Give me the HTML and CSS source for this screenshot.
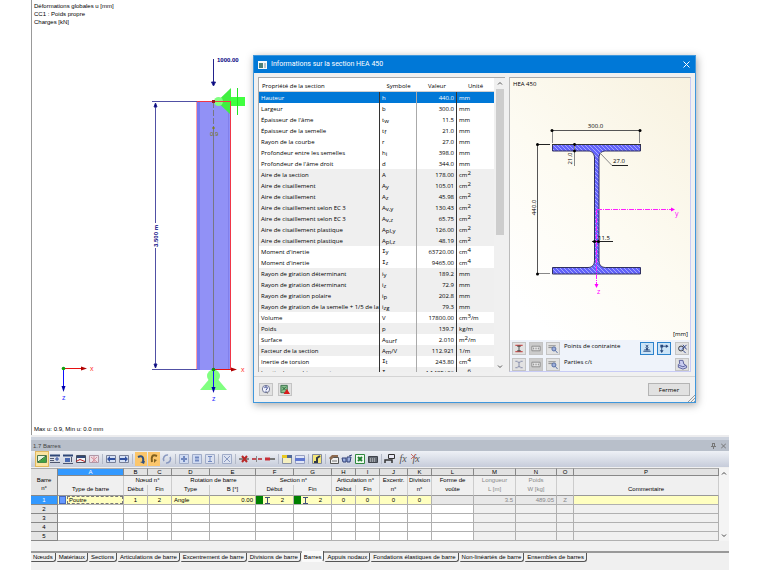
FILE: index.html
```html
<!DOCTYPE html>
<html lang="fr">
<head>
<meta charset="utf-8">
<title>Informations sur la section HEA 450</title>
<link rel="stylesheet" href="styles.css">
</head>
<body>
<main class="app">
  <section class="view">
    <svg class="model" viewBox="32 0 697 435" preserveAspectRatio="xMinYMin meet" role="img" aria-label="Modèle de la barre">
      <rect x="197" y="101" width="34" height="269" fill="#9191f6"/>
      <rect x="197" y="101" width="3" height="269" fill="#7777ee"/>
      <rect x="228" y="101" width="1" height="269" fill="#8080ec"/>
      <path d="M196.5 101v269" stroke="#ffa0a8"/>
      <path d="M217 101.500L231 88v27z" fill="#40f040"/>
      <path d="M231 97h14v9h-14z" fill="#40ff40"/>
      <path d="M237.500 88v27" stroke="#22e622"/>
      <circle cx="218.500" cy="101.500" r="4.500" fill="#80ff80"/>
      <path d="M197 101.500h34M230.500 101v269" stroke="#f03648" fill="none"/>
      <path d="M213.500 102v27" stroke="#777780" stroke-dasharray="6 2"/>
      <path d="M213.500 129v241" stroke="#777784"/>
      <circle cx="213.500" cy="128" r="1.200" fill="#80801a"/>
      <rect x="212" y="100" width="3" height="3" fill="#9c1c20"/>
      <text x="210" y="136" class="olive">0.9</text>
      <g stroke="#22228c" fill="#000080">
        <path d="M152 101.500h45M152 369.500h45" stroke="#5050a4"/>
        <path d="M155.500 103v265" stroke="#5050a4"/>
        <path d="M155.500 103l1.500 4h-3zM155.500 368l1.500-4h-3z"/>
        <path d="M213.500 59v24"/>
        <path d="M213.500 86l2-4h-4z"/>
      </g>
      <rect x="151" y="223" width="9" height="25" fill="#fff"/>
      <text transform="translate(158 247) rotate(-90)" class="navy">3.500 m</text>
      <text x="217" y="62" class="navy load">1000.00</text>
      <path d="M213.500 374L227 390h-27z" fill="#80ff80"/>
      <circle cx="213.500" cy="376" r="6.500" fill="#80ff80"/>
      <path d="M214 369.500h18" stroke="#e61010"/>
      <path d="M231 367.500l6 2-6 2z" fill="#b00000"/>
      <path d="M213.500 370v19" stroke="#1010ff"/>
      <path d="M211.500 387h4l-2 6z" fill="#0000a8"/>
      <circle cx="213.500" cy="369.500" r="1.800" fill="#109010"/>
      <text x="241" y="372" class="red">x</text>
      <text x="212" y="401" class="blue">z</text>
      <path d="M63 368.500h20" stroke="#e61010"/>
      <path d="M81 366.500l6 2-6 2z" fill="#b00000"/>
      <path d="M63.500 369v18" stroke="#1010ff"/>
      <path d="M61.500 386h4l-2 6z" fill="#0000a8"/>
      <circle cx="63.500" cy="368.500" r="1.800" fill="#10a010"/>
      <text x="90" y="371" class="red">x</text>
      <text x="62" y="400" class="blue">z</text>
    </svg>
    <div class="caption">
      <p>Déformations globales u [mm]</p>
      <p>CC1 : Poids propre</p>
      <p>Charges [kN]</p>
    </div>
    <p class="range">Max u: 0.9, Min u: 0.0 mm</p>

    <div class="dialog" role="dialog" aria-labelledby="dlg-title">
      <header class="dialog-bar">
        <svg width="9" height="8" viewBox="0 0 9 8"><path d="M0 0h9v8H0z" fill="#f4f8fa"/><path d="M1 2h4v5H1z" fill="#4c8078"/><path d="M6 2h2v5H6z" fill="#b8c4c8"/></svg>
        <h1 id="dlg-title">Informations sur la section HEA 450</h1>
        <button class="close" aria-label="Fermer la fenêtre"><svg width="7" height="7" viewBox="0 0 7 7"><path d="M.5.5l6 6M6.500.5l-6 6" stroke="#fff"/></svg></button>
      </header>
      <div class="dialog-body">
        <div class="props-box">
          <div class="props-clip">
          <table class="props">
            <colgroup><col><col class="c-sym"><col class="c-val"><col class="c-unit"></colgroup>
            <thead><tr><th class="first">Propriété de la section</th><th>Symbole</th><th>Valeur</th><th>Unité</th></tr></thead>
            <tbody>
              <tr class="sel"><td>Hauteur</td><td>h</td><td>440.0</td><td>mm</td></tr>
              <tr><td>Largeur</td><td>b</td><td>300.0</td><td>mm</td></tr>
              <tr><td>Épaisseur de l'âme</td><td>t<sub>w</sub></td><td>11.5</td><td>mm</td></tr>
              <tr><td>Épaisseur de la semelle</td><td>t<sub>f</sub></td><td>21.0</td><td>mm</td></tr>
              <tr><td>Rayon de la courbe</td><td>r</td><td>27.0</td><td>mm</td></tr>
              <tr><td>Profondeur entre les semelles</td><td>h<sub>i</sub></td><td>398.0</td><td>mm</td></tr>
              <tr><td>Profondeur de l'âme droit</td><td>d</td><td>344.0</td><td>mm</td></tr>
              <tr class="alt"><td>Aire de la section</td><td>A</td><td>178.00</td><td>cm<sup>2</sup></td></tr>
              <tr class="alt"><td>Aire de cisaillement</td><td>A<sub>y</sub></td><td>105.01</td><td>cm<sup>2</sup></td></tr>
              <tr class="alt"><td>Aire de cisaillement</td><td>A<sub>z</sub></td><td>45.98</td><td>cm<sup>2</sup></td></tr>
              <tr class="alt"><td>Aire de cisaillement selon EC 3</td><td>A<sub>v,y</sub></td><td>130.43</td><td>cm<sup>2</sup></td></tr>
              <tr class="alt"><td>Aire de cisaillement selon EC 3</td><td>A<sub>v,z</sub></td><td>65.75</td><td>cm<sup>2</sup></td></tr>
              <tr class="alt"><td>Aire de cisaillement plastique</td><td>A<sub>pl,y</sub></td><td>126.00</td><td>cm<sup>2</sup></td></tr>
              <tr class="alt"><td>Aire de cisaillement plastique</td><td>A<sub>pl,z</sub></td><td>48.19</td><td>cm<sup>2</sup></td></tr>
              <tr><td>Moment d'inertie</td><td class="serif">I<sub>y</sub></td><td>63720.00</td><td>cm<sup>4</sup></td></tr>
              <tr><td>Moment d'inertie</td><td class="serif">I<sub>z</sub></td><td>9465.00</td><td>cm<sup>4</sup></td></tr>
              <tr class="alt"><td>Rayon de giration déterminant</td><td>i<sub>y</sub></td><td>189.2</td><td>mm</td></tr>
              <tr class="alt"><td>Rayon de giration déterminant</td><td>i<sub>z</sub></td><td>72.9</td><td>mm</td></tr>
              <tr class="alt"><td>Rayon de giration polaire</td><td>i<sub>p</sub></td><td>202.8</td><td>mm</td></tr>
              <tr class="alt"><td>Rayon de giration de la semelle + 1/5 de la</td><td>i<sub>zg</sub></td><td>79.3</td><td>mm</td></tr>
              <tr><td>Volume</td><td>V</td><td>17800.00</td><td>cm<sup>3</sup>/m</td></tr>
              <tr class="alt"><td>Poids</td><td>p</td><td>139.7</td><td>kg/m</td></tr>
              <tr><td>Surface</td><td>A<sub>surf</sub></td><td>2.010</td><td>m<sup>2</sup>/m</td></tr>
              <tr class="alt"><td>Facteur de la section</td><td>A<sub>m</sub>/V</td><td>112.921</td><td>1/m</td></tr>
              <tr><td>Inertie de torsion</td><td class="serif">I<sub>t</sub></td><td>243.80</td><td>cm<sup>4</sup></td></tr>
              <tr class="alt"><td>Inertie de gauchissement</td><td class="serif">I<sub>ω</sub></td><td>4.148E+06</td><td>cm<sup>6</sup></td></tr>
            </tbody>
          </table>
          </div>
          <div class="scroll">
            <svg width="6" height="4" viewBox="0 0 6 4"><path d="M1 3.500l2-2 2 2" fill="none" stroke="#555"/></svg>
            <div class="thumb"></div>
            <svg width="6" height="4" viewBox="0 0 6 4"><path d="M1 .5l2 2 2-2" fill="none" stroke="#555"/></svg>
          </div>
        </div>

        <div class="figure">
          <svg class="profile" viewBox="510 78 180 262" role="img" aria-label="Section HEA 450">
            <defs>
              <pattern id="hatch" width="4" height="4" patternUnits="userSpaceOnUse"><path d="M0 0h4v4H0z" fill="#6262fa"/><path d="M-1-1l6 6M-1 3l2 2M3-1l2 2" stroke="#aeb2ff" stroke-width=".9"/></pattern>
            </defs>
            <text x="513" y="86" class="dim">HEA 450</text>
            <path d="M552.500 144.500h88v6.500h-35c-4 0-6.500 2.500-6.500 7v102.500c0 4.500 2.500 7 6.500 7h35v6.500h-88v-6.500h35.500c4 0 6.500-2.500 6.500-7V158c0-4.500-2.500-7-6.500-7h-35.500z" fill="url(#hatch)" stroke="#303060"/>
            <path d="M552 144.500h89" stroke="#333"/>
            <g stroke="#555" fill="none">
              <path d="M552 130.500h88M537.500 145v129"/>
              <path d="M552.500 131v12M639.500 131v12M538 273.500h12M574.500 145v21M600 153l12 12.500" stroke="#888"/>
              <path d="M538 144.500h12M612 165.500h16M592 241.500h21" stroke="#222"/>
            </g>
            <g fill="#000">
              <circle cx="552" cy="130.500" r="1.500"/><circle cx="640" cy="130.500" r="1.500"/>
              <circle cx="537.500" cy="144.500" r="1.500"/><circle cx="537.500" cy="274" r="1.500"/>
              <circle cx="574.500" cy="144.500" r="1.400"/><circle cx="574.500" cy="151" r="1.400"/>
              <circle cx="594.500" cy="241.500" r="1.500"/><circle cx="598.500" cy="241.500" r="1.500"/>
            </g>
            <text x="595.500" y="128" class="dim mid">300.0</text>
            <text transform="translate(535.500 207.500) rotate(-90)" class="dim mid">440.0</text>
            <text transform="translate(572 158.500) rotate(-90)" class="dim mid">21.0</text>
            <text x="619" y="163" class="dim mid">27.0</text>
            <text x="598" y="240" class="dim">11.5</text>
            <g stroke="#ff20ff" fill="none" stroke-dasharray="5 1 1 1"><path d="M597 209.500h75M596.500 210v76"/></g>
            <path d="M671 207.500l4 2-4 2zM594.500 284h4l-2 4z" fill="#ff00ff"/>
            <text x="675" y="216" class="axis">y</text>
            <text x="597" y="294" class="axis">z</text>
            <text x="688" y="336" class="dim end">[mm]</text>
          </svg>
          <div class="options">
            <button class="ib" aria-label="Contour"><svg viewBox="0 0 12 12"><path d="M2 2.500h8M2 9.500h8" stroke="#c02020"/><path d="M4 3.500h4M4 8.500h4M6 3v6" stroke="#444"/></svg></button>
            <button class="ib dark" aria-label="Numéros des points"><svg viewBox="0 0 12 12"><path d="M1.500 3.500h9v5h-9z" fill="#eee" stroke="#888"/><path d="M3.500 5v2M6 5v2M8.500 5v2" stroke="#777"/></svg></button>
            <button class="ib" aria-label="Détails des points"><svg viewBox="0 0 12 12"><path d="M1 3h8M1 5h5" stroke="#888"/><circle cx="7" cy="6.500" r="2.200" fill="#9fb0dc" stroke="#5068a0"/><path d="M8.500 8l2.500 3" stroke="#5068a0"/></svg></button>
            <span class="lbl">Points de contrainte</span>
            <button class="ib on" aria-label="Cotes"><svg viewBox="0 0 12 12"><path d="M2 9h8M3 7.500h6" stroke="#28487c"/><path d="M6 5v3" stroke="#28487c" stroke-width="2"/><path d="M4.500 2l3 3M7.500 2l-3 3" stroke="#28487c"/></svg></button>
            <button class="ib on" aria-label="Axes"><svg viewBox="0 0 12 12"><path d="M3.500 10V3.500H10" fill="none" stroke="#28487c"/><path d="M8 1.500l3 2-3 2zM1.500 8h4l-2 3zM2 2h3v3H2z" fill="#28487c"/></svg></button>
            <button class="ib" aria-label="Zoom"><svg viewBox="0 0 12 12"><circle cx="5" cy="6" r="2.700" fill="#c8d6f4" stroke="#333"/><path d="M7 8l3 3M7 2l4 5M11 2L6 7" stroke="#263c88"/></svg></button>
            <button class="ib" aria-label="Contour c/t"><svg viewBox="0 0 12 12"><path d="M2 2.500h2.500M7.500 2.500H10M2 9.500h2.500M7.500 9.500H10M4.500 3.500h3M4.500 8.500h3M6 3.500v5" stroke="#8088a8"/></svg></button>
            <button class="ib dark" aria-label="Numéros c/t"><svg viewBox="0 0 12 12"><path d="M1.500 3.500h9v5h-9z" fill="#eee" stroke="#888"/><path d="M3.500 5v2M6 5v2M8.500 5v2" stroke="#777"/></svg></button>
            <button class="ib" aria-label="Détails c/t"><svg viewBox="0 0 12 12"><path d="M1 3h8M1 5h5" stroke="#888"/><circle cx="7" cy="6.500" r="2.200" fill="#9fb0dc" stroke="#5068a0"/><path d="M8.500 8l2.500 3" stroke="#5068a0"/></svg></button>
            <span class="lbl">Parties c/t</span>
            <span></span><span></span>
            <button class="ib" aria-label="Imprimer"><svg viewBox="0 0 12 12"><path d="M3 1.500h4l1 4 3 2v2L7 11 2 9V6l1.500-1z" fill="#c8ccf0" stroke="#555c98"/><path d="M3 7l4 1.500L10.500 7" stroke="#555c98" fill="none"/></svg></button>
          </div>
        </div>
      </div>
      <footer class="dialog-foot">
        <button class="ib" aria-label="Aide"><svg viewBox="0 0 12 12"><circle cx="6" cy="5.500" r="4" fill="#f4f6ff" stroke="#666c90"/><path d="M4.500 4.500c0-2 3-2 3 0 0 1-1.500 1-1.500 2.200M6 7.500v1" stroke="#203080" fill="none"/><path d="M6 9l2 2 0-2z" fill="#777"/></svg></button>
        <button class="ib" aria-label="Exporter"><svg viewBox="0 0 12 12"><path d="M1.500 1.500h7v8h-7z" fill="#8cc090" stroke="#38704a"/><path d="M3 3l4 4M7 3L3 7" stroke="#1c6030"/><path d="M8 5.500l3.500 5.500h-7z" fill="#d81c1c"/></svg></button>
        <button class="push">Fermer</button>
      </footer>
      <svg class="grip" width="7" height="7" viewBox="0 0 7 7"><path d="M0 7l7-7M3 7l4-4M6 7l1-1" stroke="#999"/></svg>
    </div>
  </section>

  <section class="panel">
    <header class="panel-title">
      <h2>1.7 Barres</h2>
      <button aria-label="Épingler"><svg width="5" height="6" viewBox="0 0 5 6"><path d="M1.500 0v3M3.500 0v3M0 3.500h5M2.500 4v2M1 .5h3" stroke="#777" fill="none"/></svg></button>
      <button aria-label="Fermer le panneau"><svg width="5" height="6" viewBox="0 0 5 6"><path d="M0 .5l5 5M5 .5l-5 5" stroke="#777"/></svg></button>
    </header>
    <div class="toolbar" role="toolbar" aria-label="Outils de tableau">
      <button class="tb hot" aria-label="Modifier"><svg viewBox="0 0 12 12"><path d="M1.500 2.500h9v7h-9z" fill="#e8f4e0" stroke="#507850"/><path d="M2 9.500l8-6v6z" fill="#40a040"/><path d="M2 9l8-6" stroke="#206020"/></svg></button>
      <button class="tb" aria-label="Insérer une ligne"><svg viewBox="0 0 12 12"><path d="M1 2.500h10" stroke="#304878" stroke-width="2"/><path d="M1 5h4v1H1zM1 7h4v1H1zM1 9h10v1H1z" fill="#505870"/><path d="M8 4v4M6 6h4" stroke="#3050a0"/></svg></button>
      <button class="tb" aria-label="Copier une ligne"><svg viewBox="0 0 12 12"><path d="M1 2.500h10" stroke="#304878" stroke-width="2"/><path d="M3 5h5v4H3z" fill="#4868b0"/><path d="M1 10.500h10M9.500 4v5" stroke="#505870"/></svg></button>
      <button class="tb" aria-label="Filtrer"><svg viewBox="0 0 12 12"><path d="M1.500 2.500h9v7h-9z" fill="#f2f4f8" stroke="#485060"/><path d="M2 3h8v2H2z" fill="#304878"/><path d="M1 8.500l4-2 5 2" stroke="#c02020" fill="none"/></svg></button>
      <button class="tb" aria-label="Effacer"><svg viewBox="0 0 12 12"><path d="M1.500 2.500h9v7h-9z" fill="#ecdfe6" stroke="#b098a8"/><path d="M3 4l6 5M9 4L4 9M6 3v6" stroke="#d8909c"/></svg></button>
      <i class="sep"></i>
      <button class="tb" aria-label="Tableau précédent"><svg viewBox="0 0 12 12"><path d="M1.500 2.500h9v7h-9z" fill="#d5e0f5" stroke="#788098"/><path d="M2 6l3-3v2h5v2H5v2z" fill="#3050a0"/></svg></button>
      <button class="tb" aria-label="Tableau suivant"><svg viewBox="0 0 12 12"><path d="M1.500 2.500h9v7h-9z" fill="#d5e0f5" stroke="#788098"/><path d="M10 6L7 3v2H2v2h5v2z" fill="#3050a0"/></svg></button>
      <i class="sep"></i>
      <button class="tb hot2" aria-label="Synchroniser la sélection"><svg viewBox="0 0 12 12"><path d="M3 4c4-2 6 0 5 5" fill="none" stroke="#305080" stroke-width="2"/><path d="M5 9l5-1-1 3z" fill="#305080"/></svg></button>
      <button class="tb hot2" aria-label="Afficher la sélection"><svg viewBox="0 0 12 12"><path d="M9 3C4 1 3 4 4 9" fill="none" stroke="#806020" stroke-width="2"/><path d="M6 6l3 1-3 3z" fill="#806020"/></svg></button>
      <button class="tb" aria-label="Actualiser"><svg viewBox="0 0 12 12"><path d="M3 8a4 4 0 0 1 4-6M9 4a4 4 0 0 1-4 6" fill="none" stroke="#8898c0" stroke-width="1.500"/></svg></button>
      <i class="sep"></i>
      <button class="tb" aria-label="Ajouter"><svg viewBox="0 0 12 12"><path d="M1.500 1.500h9v9h-9z" fill="#d0dbf2" stroke="#a0acc8"/><path d="M6 3v6M3 6h6" stroke="#7088c0" stroke-width="2"/></svg></button>
      <button class="tb" aria-label="Liste"><svg viewBox="0 0 12 12"><path d="M1.500 1.500h9v9h-9z" fill="#d0dbf2" stroke="#a0acc8"/><path d="M4 4.500h4M4 7.500h4" stroke="#7088c0" stroke-width="2"/></svg></button>
      <button class="tb" aria-label="Détail"><svg viewBox="0 0 12 12"><path d="M1.500 1.500h9v9h-9z" fill="#dbe1f0" stroke="#a0acc8"/><path d="M4 3.500h4M6 3v6M4 8.500h4" stroke="#7088c0"/></svg></button>
      <i class="sep"></i>
      <button class="tb" aria-label="Tout supprimer"><svg viewBox="0 0 12 12"><path d="M1.500 1.500h9v9h-9z" fill="#dce2f0" stroke="#a0acc8"/><path d="M3 3l6 6M9 3L3 9" stroke="#8898c0"/></svg></button>
      <i class="sep"></i>
      <button class="tb" aria-label="Supprimer la barre"><svg viewBox="0 0 12 12"><path d="M1 6h10" stroke="#888" stroke-width="2"/><path d="M4 3l5 6M9 3L4 9" stroke="#b82828" stroke-width="2"/></svg></button>
      <button class="tb" aria-label="Diviser la barre"><svg viewBox="0 0 12 12"><path d="M1 6h4M7 6h4" stroke="#c05058" stroke-width="2"/><path d="M5.500 3v6" stroke="#888"/></svg></button>
      <button class="tb" aria-label="Joindre les barres"><svg viewBox="0 0 12 12"><path d="M1 4.500h5v3H1z" fill="#c83038"/><path d="M6 6h5" stroke="#777" stroke-width="2"/></svg></button>
      <i class="sep"></i>
      <button class="tb" aria-label="Couleurs"><svg viewBox="0 0 12 12"><path d="M1.500 2.500h9v8h-9z" fill="#f5f0c0" stroke="#8890a0"/><path d="M1 2h5v3H1z" fill="#e8c820"/><path d="M6 2h5v3H6z" fill="#506898"/></svg></button>
      <button class="tb" aria-label="Colonnes"><svg viewBox="0 0 12 12"><path d="M1.500 2.500h9v8h-9z" fill="#e0e6f8" stroke="#98a0c0"/><path d="M1 5h10v3H1z" fill="#6078d0"/></svg></button>
      <i class="sep"></i>
      <button class="tb" aria-label="Affichage"><svg viewBox="0 0 12 12"><path d="M1.500 1.500h9v9h-9z" fill="#f4e678" stroke="#8088a0"/><path d="M3 9h3V5l3-2" stroke="#303848" stroke-width="2" fill="none"/></svg></button>
      <i class="sep"></i>
      <button class="tb" aria-label="Propriétés"><svg viewBox="0 0 12 12"><path d="M2.500 4.500h8v6h-8z" fill="#f0f0f0" stroke="#555"/><path d="M1 5l3-3h6v2H6L3 7z" fill="#8c6a50"/><path d="M4 8h5" stroke="#777"/></svg></button>
      <button class="tb" aria-label="Lunettes"><svg viewBox="0 0 12 12"><path d="M1 5h4v4H2zM6 4h4l-1 5H6z" fill="#9cb0e0" stroke="#304078"/><path d="M8 3l3-1" stroke="#304078"/></svg></button>
      <button class="tb" aria-label="Exporter vers Excel"><svg viewBox="0 0 12 12"><path d="M1.500 1.500h9v9h-9z" fill="#f0faf0" stroke="#308840"/><path d="M4 4l4 4M8 4L4 8" stroke="#208030" stroke-width="2"/></svg></button>
      <button class="tb" aria-label="Calculatrice"><svg viewBox="0 0 12 12"><path d="M1.500 3.500h9v6h-9z" fill="#646a74" stroke="#40444c"/><path d="M3 6h6M3 8h6" stroke="#ddd" stroke-dasharray="1 1"/></svg></button>
      <i class="sep"></i>
      <button class="tb" aria-label="Référence"><svg viewBox="0 0 12 12"><path d="M4.500 1.500h6v4h-6z" fill="#e8e8f4" stroke="#333"/><path d="M1 10V7h7v3" fill="none" stroke="#333" stroke-width="1.500"/></svg></button>
      <button class="tb fx" aria-label="Formule">fx</button>
      <button class="tb fx" aria-label="Supprimer la formule">fx<svg class="over" viewBox="0 0 12 12"><path d="M1 1l5 5M6 1L1 6" stroke="#c86868"/></svg></button>
    </div>
    <div class="grid-wrap">
      <table class="grid">
        <colgroup><col class="w27"><col class="w66"><col class="w24"><col class="w24"><col class="w38"><col class="w46"><col class="w38"><col class="w38"><col class="w24"><col class="w24"><col class="w28"><col class="w24"><col class="w42"><col class="w42"><col class="w41"><col class="w17"><col></colgroup>
        <thead>
          <tr class="letters"><th rowspan="3" class="corner">Barre<br>n°</th><th class="cur">A</th><th>B</th><th>C</th><th>D</th><th>E</th><th>F</th><th>G</th><th>H</th><th>I</th><th>J</th><th>K</th><th>L</th><th>M</th><th>N</th><th>O</th><th>P</th></tr>
          <tr class="names"><th></th><th colspan="2">Nœud n°</th><th colspan="2">Rotation de barre</th><th colspan="2">Section n°</th><th colspan="2">Articulation n°</th><th>Excentr.</th><th>Division</th><th>Forme de</th><th class="dimmed">Longueur</th><th class="dimmed">Poids</th><th></th><th></th></tr>
          <tr class="names last"><th>Type de barre</th><th>Début</th><th>Fin</th><th>Type</th><th>B [°]</th><th>Début</th><th>Fin</th><th>Début</th><th>Fin</th><th>n°</th><th>n°</th><th>voûte</th><th class="dimmed">L [m]</th><th class="dimmed">W [kg]</th><th></th><th>Commentaire</th></tr>
        </thead>
        <tbody>
          <tr class="active"><th>1</th><td><div class="kind"><i class="sw"></i><span>Poutre</span></div></td><td>1</td><td>2</td><td class="l">Angle</td><td class="r">0.00</td>
            <td><div class="sect"><i></i><svg width="7" height="7" viewBox="0 0 7 7"><path d="M1 .5h5M1 6.500h5M3.500 1v5" stroke="#405078"/></svg><span>2</span></div></td>
            <td><div class="sect"><i></i><svg width="7" height="7" viewBox="0 0 7 7"><path d="M1 .5h5M1 6.500h5M3.500 1v5" stroke="#405078"/></svg><span>2</span></div></td>
            <td>0</td><td>0</td><td>0</td><td>0</td><td class="off"></td><td class="off r">3.5</td><td class="off r">489.05</td><td class="off">Z</td><td></td></tr>
          <tr><th>2</th><td></td><td></td><td></td><td></td><td></td><td></td><td></td><td></td><td></td><td></td><td></td><td></td><td class="ro"></td><td class="ro"></td><td class="ro"></td><td class="ro"></td></tr>
          <tr><th>3</th><td></td><td></td><td></td><td></td><td></td><td></td><td></td><td></td><td></td><td></td><td></td><td></td><td class="ro"></td><td class="ro"></td><td class="ro"></td><td class="ro"></td></tr>
          <tr><th>4</th><td></td><td></td><td></td><td></td><td></td><td></td><td></td><td></td><td></td><td></td><td></td><td></td><td class="ro"></td><td class="ro"></td><td class="ro"></td><td class="ro"></td></tr>
          <tr><th>5</th><td></td><td></td><td></td><td></td><td></td><td></td><td></td><td></td><td></td><td></td><td></td><td></td><td class="ro"></td><td class="ro"></td><td class="ro"></td><td class="ro"></td></tr>
        </tbody>
      </table>
      <div class="scroll wide">
        <svg width="6" height="4" viewBox="0 0 6 4"><path d="M1 3.500l2-2 2 2" fill="none" stroke="#444"/></svg>
        <svg width="6" height="4" viewBox="0 0 6 4"><path d="M1 .5l2 2 2-2" fill="none" stroke="#444"/></svg>
      </div>
    </div>
    <nav class="tabs" role="tablist">
      <button role="tab">Nœuds</button><button role="tab">Matériaux</button><button role="tab">Sections</button><button role="tab">Articulations de barre</button><button role="tab">Excentrement de barre</button><button role="tab">Divisions de barre</button><button role="tab" aria-selected="true">Barres</button><button role="tab">Appuis nodaux</button><button role="tab">Fondations élastiques de barre</button><button role="tab">Non-linéartés de barre</button><button role="tab">Ensembles de barres</button>
    </nav>
  </section>
</main>
</body>
</html>
```
FILE: styles.css
```css
* { box-sizing: border-box; }
body {
  margin: 0;
  background: #fff;
  color: #000;
  font: 6px/8px "Liberation Sans", Arial, sans-serif;
}
p, h1, h2 { margin: 0; font-size: inherit; font-weight: normal; }
button {
  margin: 0;
  padding: 0;
  border: 0;
  background: none;
  color: inherit;
  font: inherit;
}
svg { display: block; }

.app {
  display: flex;
  flex-direction: column;
  min-height: 100vh;
  margin: 0 31px;
}

/* Model view */
.view {
  position: relative;
  flex: 1;
  display: grid;
  border-left: 1px solid #999;
}
.view > .model, .caption, .range { grid-area: 1 / 1; }
.model { width: 100%; height: 100%; min-height: 0; }
.caption { padding: 2px; align-self: start; }
.range { padding: 2px; align-self: end; }
.model text { font-size: 6px; }
.model .navy { fill: #000080; font-weight: bold; }
.model .olive { fill: #77770c; }
.model .red { fill: #ff3030; font-size: 7px; }
.model .blue { fill: #3030ff; font-size: 7px; }

/* Section dialog */
.dialog {
  position: absolute;
  top: 55px;
  right: 33px;
  width: 443px;
  border: 1px solid #3f97dc;
  background: #f0f0f0;
  box-shadow: 1px 2px 8px rgba(0, 0, 0, .35);
  font-family: "Open Sans", "Noto Sans", sans-serif;
}
.dialog-bar {
  display: flex;
  align-items: center;
  gap: 4px;
  height: 17px;
  padding: 0 5px 0 4px;
  background: #0078d7;
  color: #fff;
}
.dialog-bar h1 { flex: 1; font: 7px/9px Roboto, sans-serif; }
.dialog-body {
  display: flex;
  gap: 4px;
  height: 304px;
  padding: 4px;
  border-bottom: 1px solid #d4d4d4;
}
.props-box { flex: 1; display: flex; background: #fff; border: solid #aaa; border-width: 1px 0 0 1px; }
.props-clip { flex: 1; overflow: hidden; }
.props { width: 100%; table-layout: fixed; border-collapse: separate; border-spacing: 0; }
.c-sym { width: 37px; }
.c-val { width: 40px; }
.c-unit { width: 37px; }
.props th { height: 14px; padding: 2px 0 0; font-weight: normal; border-bottom: 1px solid #d0d0d0; }
.props th.first { text-align: left; padding-left: 3px; }
.props td {
  height: 11px;
  padding: 0 2px;
  line-height: 10px;
  white-space: nowrap;
  overflow: hidden;
  border-right: 1px solid #333;
}
.props td:nth-child(2) { border-right-color: #aaa; }
.props td:nth-child(3) { text-align: right; }
.props td:nth-child(4) { border-right: 0; }
.props .alt td { background: #efefef; }
.props .sel td { background: #0078d7; color: #fff; }
.props .serif { font-family: "Liberation Mono", monospace; }
sub, sup { font: 6px/1px "Open Sans", sans-serif; }
sub { vertical-align: -1px; }
sup { vertical-align: 2px; }
.scroll {
  display: flex;
  flex-direction: column;
  align-items: center;
  width: 11px;
  padding: 3px 1px;
  background: #f0f0f0;
}
.thumb { width: 8px; height: 146px; margin: 4px 0 auto; background: #cdcdcd; }
.scroll.wide { width: 10px; justify-content: space-between; background: #f4f4f4; }

.figure {
  display: flex;
  flex-direction: column;
  width: 182px;
  border: 1px solid #c8cbf6;
  border-top-color: #aaa;
  border-left-color: #bbb;
  background: #eff3fa;
}
.profile { width: 100%; background: linear-gradient(45deg, #fff 10%, #fdfbf2 50%, #f8f2e0); }
.dim { font: 6px "Open Sans", sans-serif; fill: #000; }
.mid { text-anchor: middle; }
.end { text-anchor: end; }
.axis { font: 7px "Open Sans", sans-serif; fill: #ff00ff; }
.options {
  display: grid;
  grid-template-columns: 14px 14px 14px 1fr 14px 14px 14px;
  gap: 3px;
  padding: 2px 2px 0;
}
.options .ib:nth-child(7n) { margin-left: 1px; }
.lbl { padding-left: 1px; }
.ib {
  width: 14px;
  height: 13px;
  border: 1px solid #c4c4c4;
  background: #e2e2e2;
}
.ib svg { width: 12px; height: 11px; }
.ib.dark { background: #cbcbcb; }
.ib.on { border-color: #2c82cc; background: #cce4f7; }
.dialog-foot { display: flex; gap: 5px; padding: 6px 5px; }
.push {
  width: 42px;
  margin-left: auto;
  border: 1px solid #b4b4b4;
  background: #e1e1e1;
}
.grip { position: absolute; right: 0; bottom: 0; }

/* Member table */
.panel { border-top: 2px solid #ececee; background: #f0f0f0; }
.panel-title {
  display: flex;
  align-items: center;
  gap: 5px;
  height: 14px;
  padding: 0 3px 0 2px;
  border-top: 3px solid #cdd3de;
  background: #b8bfca;
  color: #444;
}
.panel-title h2 { flex: 1; }
.toolbar {
  display: flex;
  align-items: center;
  gap: 1px;
  height: 16px;
  padding-left: 5px;
  background: linear-gradient(#eef1f6, #c6ccda);
}
.tb { position: relative; width: 12px; height: 14px; padding: 1px 0; }
.tb svg { width: 12px; height: 12px; }
.tb.hot { background: #fbe3a0; outline: 1px solid #e0b860; }
.tb.hot2 { background: #fbc66c; }
.tb.fx { font: italic 10px/12px "Liberation Serif", serif; color: #555; }
.tb .over { position: absolute; top: 1px; left: 0; }
.sep { width: 1px; height: 10px; margin: 0 1px; background: #b4bac8; }

.grid-wrap { display: flex; margin-top: 1px; }
.grid { flex: 1; width: 100%; table-layout: fixed; border-collapse: separate; border-spacing: 0; }
.w17 { width: 17px; } .w24 { width: 24px; } .w27 { width: 27px; } .w28 { width: 28px; }
.w38 { width: 38px; } .w41 { width: 41px; } .w42 { width: 42px; } .w46 { width: 46px; } .w66 { width: 66px; }
.grid th, .grid td {
  padding: 0;
  font-weight: normal;
  text-align: center;
  white-space: nowrap;
  line-height: 8px;
  border: solid #b0b0b0;
  border-width: 0 1px 1px 0;
}
.grid td { height: 9px; background: #fff; }
.grid .letters th { height: 8px; line-height: 6px; background: #e2e2e2; border-color: #888; border-top: 1px solid #aaa; }
.grid .letters .cur, .grid .active th { background: #3399ff; color: #fff; }
.grid .names th { height: 9px; vertical-align: top; border-bottom: 0; border-color: #ccc; }
.grid .names.last th { height: 11px; border-bottom: 1px solid #999; }
.grid .letters .corner { line-height: 8px; padding-bottom: 3px; vertical-align: bottom; background: #e4e4e4; }
.grid tbody th { background: #e4e4e4; border-color: #888; }
.grid .active td { background: #ffffc0; }
.grid .active .off { background: #e8e8e8; color: #888; }
.grid .ro { background: #f0f0f0; }
.grid .dimmed { color: #888; }
.grid .l { text-align: left; padding-left: 2px; }
.grid .r { text-align: right; padding-right: 2px; }
.kind { display: flex; padding-left: 1px; gap: 1px; height: 8px; }
.sw { width: 7px; border: 1px solid #4468c0; background: #6699ff; }
.kind span { flex: 1; padding-left: 1px; text-align: left; line-height: 6px; border: 1px dashed #777; }
.sect { display: flex; align-items: center; gap: 1px; }
.sect i { width: 7px; height: 8px; background: #008000; }
.sect span { flex: 1; }

.tabs { display: flex; margin-top: 10px; padding-bottom: 9px; border-top: 2px solid #999; }
.tabs button {
  height: 9px;
  padding: 0 2px;
  line-height: 8px;
  white-space: nowrap;
  border: solid #555;
  border-width: 0 1px 1px 0;
  border-radius: 0 0 3px 1px;
  margin-right: 1px;
}
.tabs [aria-selected="true"] { margin-top: -2px; padding-top: 2px; height: 11px; background: #fafafa; border-bottom-color: #fafafa; }
```
